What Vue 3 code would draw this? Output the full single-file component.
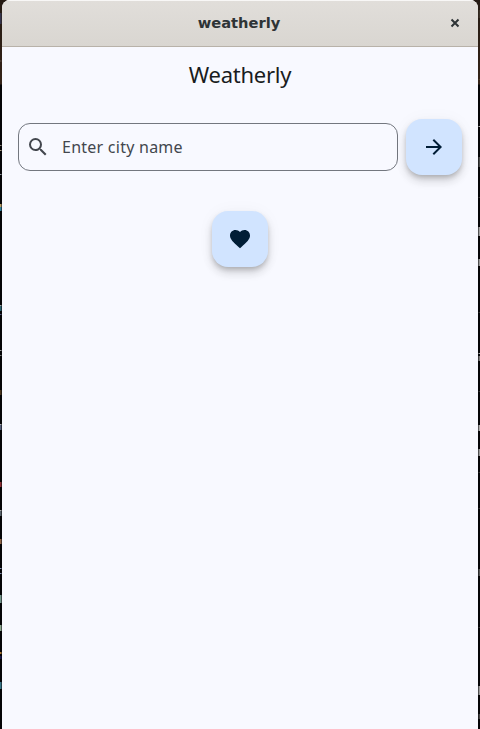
<script setup>
const leftMarks = [
  [13, 11, '#34344c'], [60, 2, '#4a3b30'], [145, 1, '#8b8378'], [150, 1, '#a79880'], [174, 1, '#8c939b'],
  [204, 3, '#b59a62'], [207, 4, '#32809c'], [305, 1, '#a0a0a0'], [306, 5, '#2c6370'], [314, 1, '#555580'],
  [350, 1, '#999'], [355, 1, '#777'], [390, 5, '#49351d'], [424, 1, '#aaa'], [425, 5, '#555f7b'],
  [482, 5, '#8c2e35'], [510, 1, '#aaa'], [511, 5, '#59626b'], [539, 5, '#8f6548'], [568, 1, '#8490b0'],
  [573, 1, '#8490b0'], [595, 8, '#73958b'], [625, 6, '#8ca68f'], [652, 2, '#a9732f'], [656, 3, '#17174c'],
  [682, 7, '#397587']
]
const rightMarks = [
  [10, 8, '#3b3127'], [79, 1, '#4b3726'], [126, 1, '#aaa'], [157, 10, '#4b4b4b'], [197, 1, '#333'],
  [227, 9, '#a2a2a2'], [259, 7, '#999'], [312, 1, '#333'], [353, 1, '#aaa'], [356, 5, '#777'],
  [391, 1, '#333'], [425, 6, '#aaa'], [449, 7, '#999'], [472, 1, '#333'], [508, 1, '#333'],
  [569, 7, '#555'], [627, 1, '#333'], [686, 9, '#999'], [714, 5, '#444']
]
</script>

<template>
  <div class="desktop">
    <svg class="edge" width="2" height="729" aria-hidden="true">
      <rect v-for="m in leftMarks" :key="m[0]" x="0" :y="m[0]" width="1.5" :height="m[1]" :fill="m[2]" />
    </svg>
    <main class="window">
      <header class="titlebar">
        <span class="window-title">weatherly</span>
        <button class="close" aria-label="Close">
          <svg width="10" height="10" viewBox="0 0 10 10"><path d="M1.5 1.5 8.5 8.5M8.5 1.5 1.5 8.5" fill="none" stroke="#2e3436" stroke-width="2" /></svg>
        </button>
      </header>
      <h1>Weatherly</h1>
      <div class="search-row">
        <label class="field">
          <svg width="24" height="24" viewBox="0 0 24 24"><path fill="#43474e" d="M15.5 14h-.79l-.28-.27A6.471 6.471 0 0 0 16 9.5 6.5 6.5 0 1 0 9.5 16c1.61 0 3.09-.59 4.23-1.57l.27.28v.79l5 4.99L20.49 19l-4.99-5zm-6 0C7.01 14 5 11.99 5 9.5S7.01 5 9.5 5 14 7.01 14 9.5 11.99 14 9.5 14z" /></svg>
          <span class="placeholder">Enter city name</span>
        </label>
        <button class="fab" aria-label="Search">
          <svg width="24" height="24" viewBox="0 0 24 24"><path fill="#001d36" d="M12 4l-1.41 1.41L16.17 11H4v2h12.17l-5.58 5.59L12 20l8-8z" /></svg>
        </button>
      </div>
      <button class="fab favorite" aria-label="Favorites">
        <svg width="24" height="24" viewBox="0 0 24 24"><path fill="#001d36" d="M12 21.35l-1.45-1.32C5.4 15.36 2 12.28 2 8.5 2 5.42 4.42 3 7.5 3c1.74 0 3.41.81 4.5 2.09C13.09 3.81 14.76 3 16.5 3 19.58 3 22 5.42 22 8.5c0 3.78-3.4 6.86-8.55 11.54L12 21.35z" /></svg>
      </button>
    </main>
    <svg class="edge" width="2" height="729" aria-hidden="true">
      <rect v-for="m in rightMarks" :key="m[0]" x="0.5" :y="m[0]" width="1.5" :height="m[1]" :fill="m[2]" />
    </svg>
  </div>
</template>

<style>
body { margin: 0; }
</style>

<style scoped>
* { box-sizing: border-box; }
.desktop {
  display: flex;
  width: 480px;
  height: 729px;
  overflow: hidden;
  background: linear-gradient(#241a13 0, #352419 84px, #050507 85px, #050507 100%);
}
.edge { display: block; flex: none; }
.window {
  display: flex;
  flex-direction: column;
  width: 476px;
  height: 729px;
  overflow: hidden;
  border-radius: 8px 8px 0 0;
  background: #f8f9ff;
}
.titlebar {
  display: grid;
  grid-template-columns: 45px 1fr 46px;
  align-items: center;
  flex: none;
  height: 47px;
  border-bottom: 1px solid #b8b2a9;
  background: linear-gradient(#e1deda, #d9d6d1);
  box-shadow: inset 0 1px #f8f7f6;
}
.window-title {
  grid-column: 2;
  padding-right: 1px;
  text-align: center;
  font: bold 14.67px/20px "DejaVu Sans", sans-serif;
  color: #2e3436;
}
button { padding: 0; border: 0; }
.close {
  display: grid;
  place-items: center;
  width: 46px;
  height: 46px;
  background: none;
}
h1 {
  margin: 13px 0 0;
  height: 28px;
  text-align: center;
  font: 400 22px/28px "Noto Sans", sans-serif;
  letter-spacing: -0.25px;
  color: #191c20;
}
.search-row {
  display: flex;
  align-items: center;
  gap: 8px;
  margin-top: 31px;
  padding: 0 16px;
}
.field {
  display: flex;
  align-items: center;
  flex: 1;
  gap: 12px;
  height: 48px;
  padding-left: 7px;
  border: 1px solid #73777f;
  border-radius: 12px;
}
.placeholder {
  font: 400 16px/24px "Noto Sans", sans-serif;
  letter-spacing: 0.25px;
  color: #43474e;
}
.fab {
  display: grid;
  place-items: center;
  flex: none;
  width: 56px;
  height: 56px;
  border-radius: 16px;
  background: #d1e4ff;
  box-shadow: 0 3px 5px -1px rgba(0, 0, 0, .2), 0 6px 10px rgba(0, 0, 0, .14), 0 1px 18px rgba(0, 0, 0, .04);
}
.favorite {
  align-self: center;
  margin-top: 36px;
}
</style>
